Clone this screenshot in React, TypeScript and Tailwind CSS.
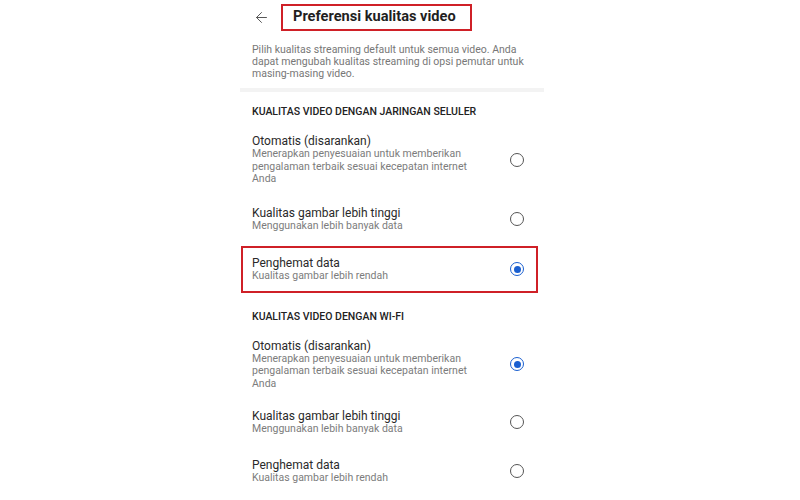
import { ArrowLeft } from 'lucide-react';

type Option = {
  title: string;
  lines: string[];
  selected?: boolean;
};

function Radio({ selected }: { selected?: boolean }) {
  if (selected) {
    return (
      <div className="w-[14px] h-[14px] rounded-full border-[1.5px] border-[#1a5fd0] flex items-center justify-center shrink-0">
        <div className="w-[7px] h-[7px] rounded-full bg-[#1a5fd0]" />
      </div>
    );
  }
  return <div className="w-[14px] h-[14px] rounded-full border-[1.5px] border-[#555] shrink-0" />;
}

function OptionRow({ option }: { option: Option }) {
  return (
    <div className="flex items-center justify-between">
      <div>
        <p className="text-[12px] leading-[14px] text-[#2a2a2a]">{option.title}</p>
        {option.lines.map((line) => (
          <p key={line} className="text-[10.5px] leading-[12.5px] text-[#7c7c7c]">
            {line}
          </p>
        ))}
      </div>
      <Radio selected={option.selected} />
    </div>
  );
}

const auto: string[] = [
  'Menerapkan penyesuaian untuk memberikan',
  'pengalaman terbaik sesuai kecepatan internet',
  'Anda',
];

export default function App() {
  return (
    <div className="w-[800px] h-[500px] bg-white overflow-hidden font-['Roboto',sans-serif]">
      <div className="ml-[240px] w-[304px] h-full bg-white">
        {/* Header */}
        <div className="h-[34px] flex items-center pl-[13px]">
          <ArrowLeft size={17} strokeWidth={1.4} className="text-[#555]" />
          <div className="ml-[11px] h-[27px] w-[191px] border-2 border-[#cf2027] flex items-center px-[10px]">
            <h1 className="text-[14.6px] font-bold text-[#1f1f1f]">Preferensi kualitas video</h1>
          </div>
        </div>

        {/* Description */}
        <p className="mt-[10px] px-3 text-[10.5px] leading-[12px] text-[#777]">
          Pilih kualitas streaming default untuk semua video. Anda dapat mengubah kualitas streaming di opsi pemutar untuk masing-masing video.
        </p>
        <div className="mt-[8px] h-[4px] bg-[#f3f3f3]" />

        {/* Mobile section */}
        <div className="pl-3 pr-[20px]">
          <h2 className="mt-[13px] text-[10.5px] leading-[14px] font-medium text-[#222]">
            KUALITAS VIDEO DENGAN JARINGAN SELULER
          </h2>
          <div className="mt-[15px]">
            <OptionRow option={{ title: 'Otomatis (disarankan)', lines: auto }} />
          </div>
          <div className="mt-[20px]">
            <OptionRow option={{ title: 'Kualitas gambar lebih tinggi', lines: ['Menggunakan lebih banyak data'] }} />
          </div>
        </div>
        <div className="mt-[14px] ml-[1px] w-[297px] border-2 border-[#cf2027] pl-[9px] pr-[12px] pt-[8px] pb-[8px]">
          <OptionRow option={{ title: 'Penghemat data', lines: ['Kualitas gambar lebih rendah'], selected: true }} />
        </div>

        {/* Wi-Fi section */}
        <div className="pl-3 pr-[20px]">
          <h2 className="mt-[17px] text-[10.5px] leading-[14px] font-medium text-[#222]">
            KUALITAS VIDEO DENGAN WI-FI
          </h2>
          <div className="mt-[15px]">
            <OptionRow option={{ title: 'Otomatis (disarankan)', lines: auto, selected: true }} />
          </div>
          <div className="mt-[19px]">
            <OptionRow option={{ title: 'Kualitas gambar lebih tinggi', lines: ['Menggunakan lebih banyak data'] }} />
          </div>
          <div className="mt-[22px]">
            <OptionRow option={{ title: 'Penghemat data', lines: ['Kualitas gambar lebih rendah'] }} />
          </div>
        </div>
      </div>
    </div>
  );
}
